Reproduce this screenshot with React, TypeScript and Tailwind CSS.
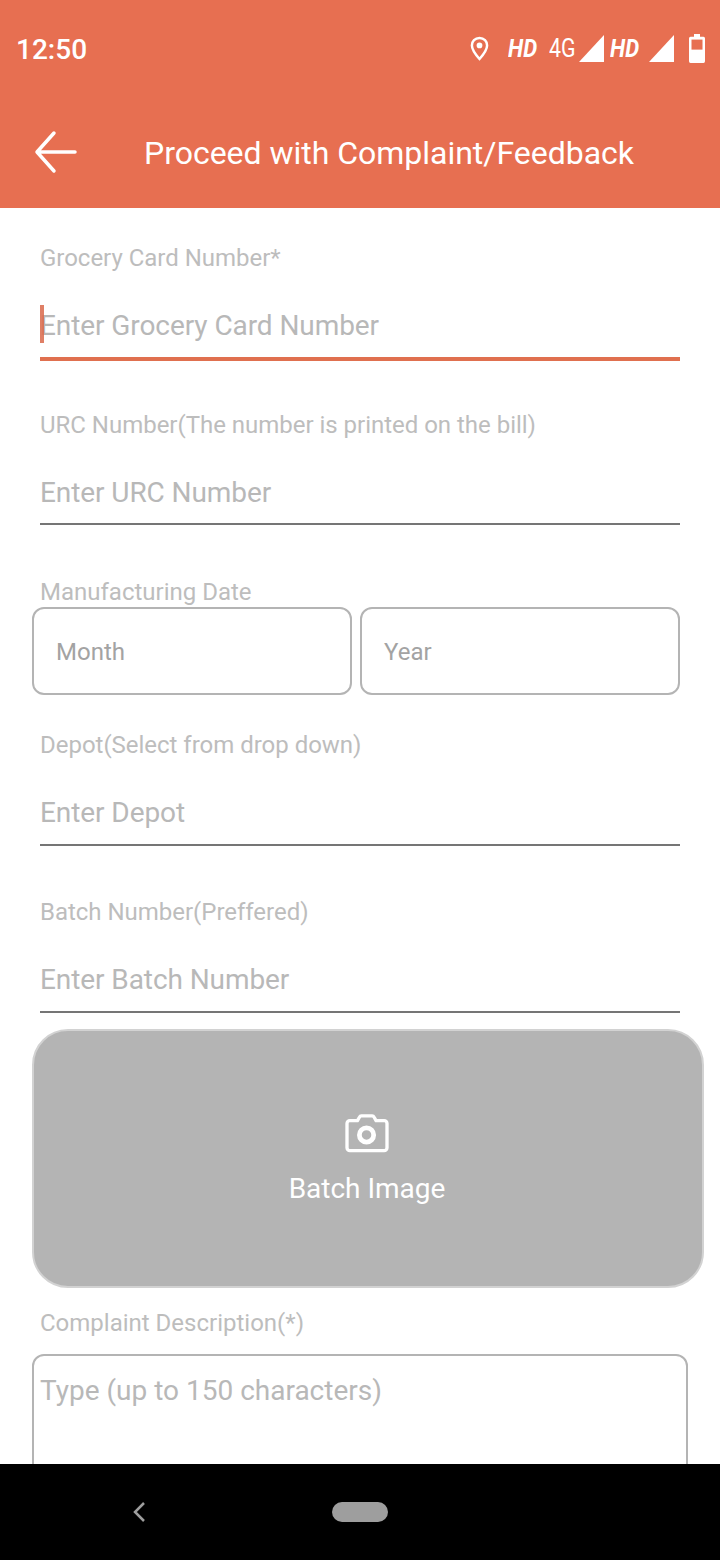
import React from "react";

const font = { fontFamily: "Roboto, sans-serif" };

function Field({ label, placeholder, active, boxClass }: { label: string; placeholder: string; active?: boolean; boxClass: string }) {
  return (
    <div className="mx-10 h-[167px] pt-[34px]">
      <div className="h-8 text-[24px] leading-8 tracking-[-0.02px] text-[#bdbdbd]">{label}</div>
      <div className={`relative mt-[19px] pt-[17px] ${boxClass}`}>
        <div className="h-8 text-[28px] leading-8 tracking-[-0.08px] text-[#b8b8b8]">{placeholder}</div>
        {active && <div className="absolute left-0 top-[12px] h-[38px] w-1 bg-[#d9694b]/85" />}
      </div>
    </div>
  );
}

function Signal() {
  return (
    <svg width="25" height="27" viewBox="0 0 25 27" className="block">
      <path d="M25 0V27H0Z" fill="#fff" />
    </svg>
  );
}

export default function App() {
  return (
    <div className="flex h-[1560px] w-[720px] flex-col overflow-hidden bg-white" style={font}>
      <header className="h-[208px] shrink-0 bg-[#e76f51] text-white">
        <div className="flex h-[96px] items-center justify-between pl-4 pr-[15px]">
          <span className="pt-1 text-[28px] font-medium leading-8">12:50</span>
          <div className="flex items-center">
            <svg width="19" height="27" viewBox="0 0 20 26" fill="none" className="block">
              <path d="M10 2C5.200 2 2 5.500 2 9.800 2 15 10 24 10 24s8-9 8-14.200C18 5.500 14.800 2 10 2Z" stroke="#fff" strokeWidth="2.600" />
              <circle cx="10" cy="9.800" r="3" fill="#fff" />
            </svg>
            <span className="ml-[19px] w-7 origin-left scale-x-[0.85] whitespace-nowrap text-[26px] font-bold italic leading-6">HD</span>
            <span className="ml-[13px] w-[26px] origin-left scale-x-[0.82] whitespace-nowrap text-[26px] leading-6">4G</span>
            <span className="ml-1"><Signal /></span>
            <span className="ml-[6px] w-7 origin-left scale-x-[0.85] whitespace-nowrap text-[26px] font-bold italic leading-6">HD</span>
            <span className="ml-[11px]"><Signal /></span>
            <svg width="16" height="29" viewBox="0 0 16 26" preserveAspectRatio="none" className="ml-[15px] block">
              <path d="M5 0h6v2.500h3.500a1.500 1.500 0 0 1 1.500 1.500v20.500a1.500 1.500 0 0 1-1.500 1.500h-13A1.500 1.500 0 0 1 0 24.500V4a1.500 1.500 0 0 1 1.500-1.500H5Z" fill="#fff" />
              <rect x="2.500" y="5" width="11" height="9" fill="#e76f51" />
            </svg>
          </div>
        </div>
        <div className="flex h-[112px] items-start pt-[34px]">
          <svg width="44" height="44" viewBox="0 0 44 44" fill="none" className="ml-[34px] block" stroke="#fff" strokeWidth="3.500" strokeLinecap="round" strokeLinejoin="round">
            <path d="M41 22H4M20 3 3 22l17 19" />
          </svg>
          <div className="ml-[66px] mt-px text-[32px] leading-[44px] tracking-[-0.02px]">Proceed with Complaint/Feedback</div>
        </div>
      </header>

      <main className="min-h-0 flex-1 overflow-hidden">
        <Field label="Grocery Card Number*" placeholder="Enter Grocery Card Number" active boxClass="h-[68px] border-b-4 border-[#e0704f]" />
        <Field label="URC Number(The number is printed on the bill)" placeholder="Enter URC Number" boxClass="h-[65px] border-b-2 border-[#757575]" />

        <div className="mx-10 mt-[34px] h-8 text-[24px] leading-8 text-[#bdbdbd]">Manufacturing Date</div>
        <div className="-mt-px ml-[32px] flex gap-2">
          <div className="flex h-[88px] w-[320px] items-center rounded-[12px] border-2 border-[#b4b4b4] pl-[22px] pt-[2px] text-[24px] text-[#a3a3a3]">Month</div>
          <div className="flex h-[88px] w-[320px] items-center rounded-[12px] border-2 border-[#b4b4b4] pl-[22px] pt-[2px] text-[24px] text-[#a3a3a3]">Year</div>
        </div>

        <Field label="Depot(Select from drop down)" placeholder="Enter Depot" boxClass="h-[66px] border-b-2 border-[#757575]" />
        <Field label="Batch Number(Preffered)" placeholder="Enter Batch Number" boxClass="h-[66px] border-b-2 border-[#757575]" />

        <div className="ml-[32px] flex h-[259px] w-[672px] flex-col items-center rounded-[36px] border-2 border-[#d2d2d2] bg-[#b4b4b4] pr-[2px] pt-[82px] text-white">
          <svg width="44" height="40" viewBox="0 0 46 42" fill="none" className="block">
            <path d="M5 39.500h36a3 3 0 0 0 3-3V11a3 3 0 0 0-3-3h-8.500l-2-3.500c-.5-1-1-1.500-2-1.500H17c-1 0-1.500.5-2 1.500L13 8H5a3 3 0 0 0-3 3v25.500a3 3 0 0 0 3 3Z" stroke="#fff" strokeWidth="3.500" strokeLinejoin="round" />
            <circle cx="22.500" cy="23" r="7.500" stroke="#fff" strokeWidth="5" />
          </svg>
          <div className="mt-[20px] text-[28px] leading-8 tracking-[-0.02px]">Batch Image</div>
        </div>

        <div className="mx-10 mt-[19px] h-8 text-[24px] leading-8 text-[#bdbdbd]">Complaint Description(*)</div>
        <div className="ml-[32px] mt-[15px] h-[160px] w-[656px] rounded-[12px] border-2 border-[#b4b4b4] pl-[6px] pt-[19px] text-[28px] leading-8 text-[#b8b8b8]">Type (up to 150 characters)</div>
      </main>

      <nav className="flex h-[96px] shrink-0 items-center bg-black">
        <svg width="14" height="22" viewBox="0 0 14 22" fill="none" className="ml-[132px] block">
          <path d="M12 2 3 11l9 9" stroke="#9e9e9e" strokeWidth="2.500" />
        </svg>
        <div className="ml-[186px] h-5 w-14 rounded-full bg-[#9e9e9e]" />
      </nav>
    </div>
  );
}
